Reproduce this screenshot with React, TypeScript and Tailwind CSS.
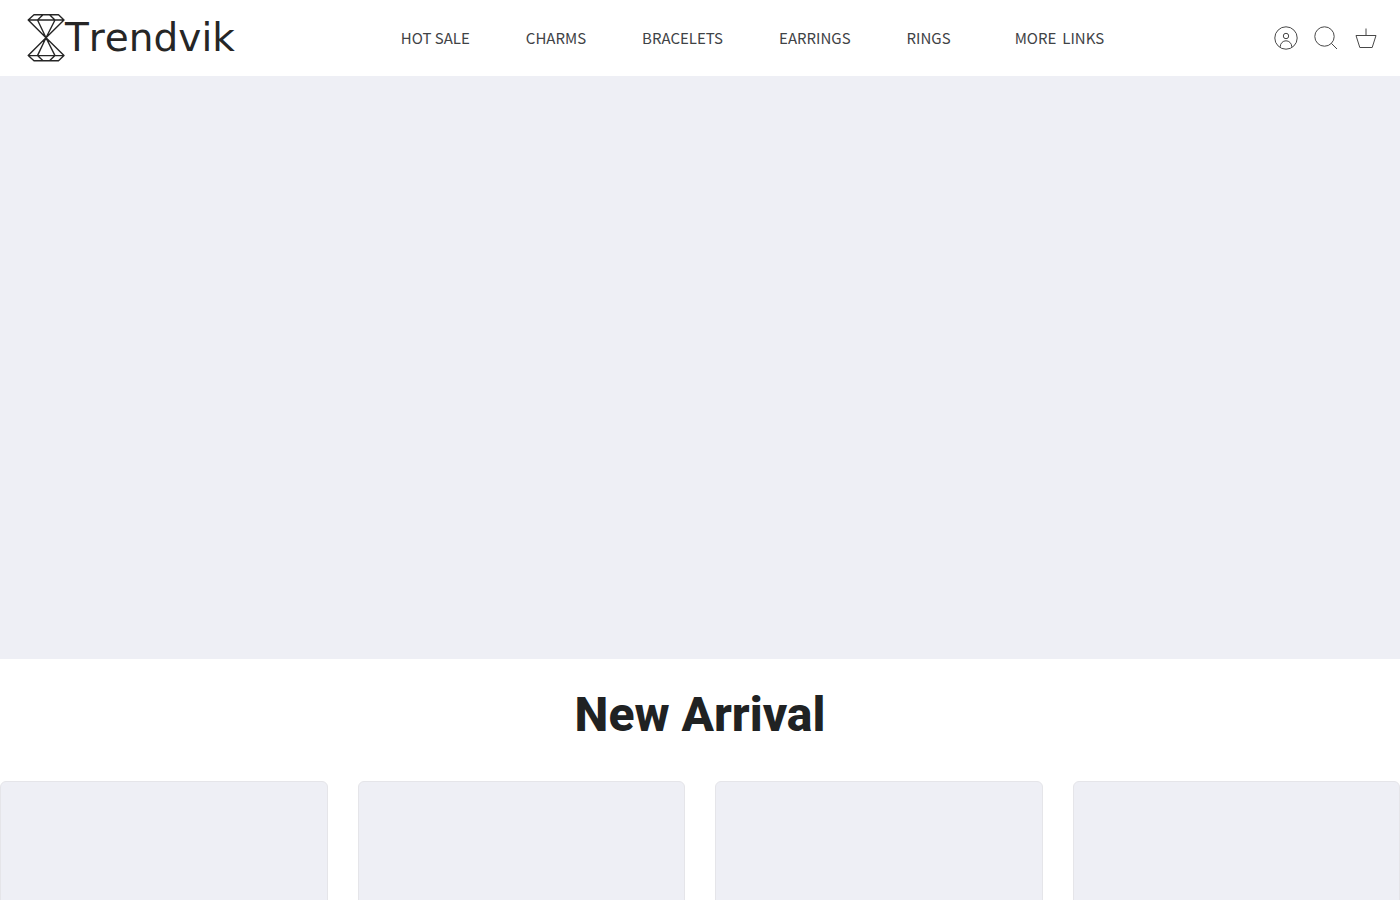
const links = ["HOT SALE", "CHARMS", "BRACELETS", "EARRINGS", "RINGS"];

function Logo() {
  return (
    <a href="#" className="flex items-center text-[#262626]">
      <svg width="38" height="48" viewBox="0 0 38 48" fill="none" stroke="currentColor" strokeWidth="1.4" strokeLinejoin="round" aria-hidden="true">
        <path d="M1.200 6 7 .8H31.500L37 6 19 23.800ZM1.200 6H37M16 .8 10.500 6 19 23.800 28 6 22.500 .8" />
        <path d="M1.200 41.600 7 46.800H31.500L37 41.600 19 23.800ZM1.200 41.600H37M16 46.800 10.500 41.600 19 23.800 28 41.600 22.500 46.800" />
      </svg>
      <span className="font-['DejaVu_Sans',sans-serif] text-[39px] leading-[48px] [font-kerning:none]">Trendvik</span>
    </a>
  );
}

export default function App() {
  return (
    <div className="min-h-screen overflow-hidden bg-white font-['Noto_Sans_CJK_SC',sans-serif] text-[#202223]">
      <header className="grid h-[76px] grid-cols-[1fr_auto_1fr] items-center pr-5 pl-[27px]">
        <Logo />
        <nav aria-label="Main" className="ml-[98px] flex items-center gap-14 text-[15px] leading-6 whitespace-nowrap text-[#3f4346]">
          {links.map((link) => (
            <a key={link} href="#">{link}</a>
          ))}
          <button type="button" className="ml-2 flex gap-1.5">
            <span>MORE</span>
            <span>LINKS</span>
          </button>
        </nav>
        <div className="flex justify-end gap-3 text-[#484848]">
          <button type="button" aria-label="Account">
            <svg width="28" height="28" viewBox="0 0 28 28" fill="none" stroke="currentColor">
              <circle cx="14" cy="14" r="11.2" />
              <circle cx="14" cy="12" r="2.7" />
              <path d="M8.300 23.500V22.500a5.700 5.700 0 0 1 11.400 0v1" />
            </svg>
          </button>
          <button type="button" aria-label="Search">
            <svg width="28" height="28" viewBox="0 0 28 28" fill="none" stroke="currentColor">
              <circle cx="12.500" cy="12.500" r="9.700" />
              <path d="m19.300 19.300 5.700 5.700" />
            </svg>
          </button>
          <button type="button" aria-label="Cart">
            <svg width="28" height="28" viewBox="0 0 28 28" fill="none" stroke="currentColor">
              <path d="M4 11.500H24L20.200 23.500H7.800ZM14 4.500V11.500" />
            </svg>
          </button>
        </div>
      </header>
      <main>
        <div className="aspect-[1400/583] w-full bg-[#eeeff5]" />
        <h2 className="pt-6 pb-[34px] text-center font-['Roboto',sans-serif] text-[48px] leading-[64px] font-extrabold">New Arrival</h2>
        <div className="grid grid-cols-4 gap-[30px]">
          {[1, 2, 3, 4].map((card) => (
            <div key={card} className="aspect-square rounded-md border border-[#e5e5e9] bg-[#eeeff5]" />
          ))}
        </div>
      </main>
    </div>
  );
}
